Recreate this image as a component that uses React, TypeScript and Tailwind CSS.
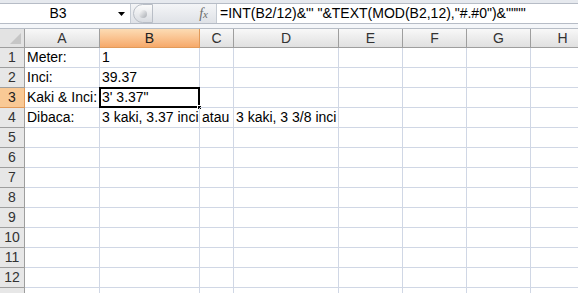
const cols = [
  { key: 'A', w: 'w-[75px]' },
  { key: 'B', w: 'w-[100px]' },
  { key: 'C', w: 'w-[34px]' },
  { key: 'D', w: 'w-[105px]' },
  { key: 'E', w: 'w-[64px]' },
  { key: 'F', w: 'w-[64px]' },
  { key: 'G', w: 'w-[64px]' },
  { key: 'H', w: 'w-[64px]' },
]

const data: Record<string, string> = {
  A1: 'Meter:',
  B1: '1',
  A2: 'Inci:',
  B2: '39.37',
  A3: 'Kaki & Inci:',
  B3: '3\' 3.37"',
  A4: 'Dibaca:',
  B4: '3 kaki, 3.37 inci',
  C4: 'atau',
  D4: '3 kaki, 3 3/8 inci',
}

// row 13 only peeks in at the bottom edge, its label is below the fold
const rows = Array.from({ length: 13 }, (_, i) => i + 1)

function FormulaBar() {
  return (
    <div className="flex h-[29px] flex-col bg-[#dde4ee]">
      <div className="h-[3px] bg-[#e6e9ee]" />
      <div className="flex h-[21px] border-y border-[#b6bcc6] bg-white">
        <div className="relative flex w-[131px] items-center justify-center border-r border-[#c5cbd3] pr-[14px] text-[14px] text-black">
          B3
          <svg className="absolute right-[5px] top-[8px]" width="7" height="4" viewBox="0 0 7 4">
            <path d="M0 0h7L3.5 4z" fill="#000" />
          </svg>
        </div>
        <div className="flex w-[86px] items-center border-r border-[#c5cbd3] bg-gradient-to-b from-[#f4f5f7] to-[#dfe2e7]">
          <div className="ml-[2px] flex h-[19px] w-[20px] items-center justify-center rounded-l-full border border-[#b9bec6] bg-gradient-to-b from-[#fbfbfb] to-[#d9dce1]">
            <div className="h-[8px] w-[8px] rounded-full bg-gradient-to-br from-[#ffffff] to-[#a9adb3]" />
          </div>
          <span className="ml-auto mr-[8px] font-['Liberation_Serif',serif] text-[14px] italic text-[#6b6b6b]">
            f<span className="text-[11px]">x</span>
          </span>
        </div>
        <div className="flex items-center pl-[3px] text-[14px] whitespace-nowrap text-black">
          =INT(B2/12)&amp;"' "&amp;TEXT(MOD(B2,12),"#.#0")&amp;""""
        </div>
      </div>
      <div className="h-[5px] border-b border-[#b7bdc6] bg-[#f4f6f9]" />
    </div>
  )
}

export default function App() {
  return (
    <div className="h-[293px] w-[578px] overflow-hidden bg-white font-['Liberation_Sans',Arial,sans-serif]">
      <FormulaBar />
      <div className="flex h-[19px]">
        <div className="relative w-[25px] shrink-0 border-r border-b border-[#9e9e9e] bg-[#e3e3e3]">
          <svg className="absolute right-[3px] bottom-[3px]" width="11" height="11" viewBox="0 0 11 11">
            <path d="M11 0V11H0z" fill="#c6c6c6" />
          </svg>
        </div>
        {cols.map((c) => (
          <div
            key={c.key}
            className={`${c.w} flex shrink-0 items-center justify-center border-r border-b text-[14px] ${
              c.key === 'B'
                ? 'border-[#e19a5a] bg-gradient-to-b from-[#fcdcb4] to-[#f6a96a] text-[#222]'
                : 'border-[#9e9e9e] bg-gradient-to-b from-[#f8f8f8] to-[#e0e0e0] text-[#333]'
            }`}
          >
            {c.key}
          </div>
        ))}
      </div>
      {rows.map((r) => (
        <div key={r} className="flex h-[20px]">
          <div
            className={`flex w-[25px] shrink-0 items-end justify-center border-r border-b pb-[1px] text-[14px] leading-[17px] ${
              r === 3
                ? 'border-[#e19a5a] bg-[#f9c995] text-[#222]'
                : 'border-[#9e9e9e] bg-[#e7e7e7] text-[#333]'
            }`}
          >
            {r < 13 ? r : ''}
          </div>
          {cols.map((c) => {
            const id = `${c.key}${r}`
            const selected = id === 'B3'
            return (
              <div
                key={c.key}
                className={`${c.w} relative flex shrink-0 items-end overflow-visible border-r border-b border-[#d0d7e5] pb-[1px] pl-[2px] text-[14px] leading-[17px] whitespace-nowrap text-black`}
              >
                {data[id]}
                {selected && (
                  <>
                    <div className="pointer-events-none absolute -top-[1px] -left-[1px] h-[21px] w-[101px] border-2 border-black" />
                    <div className="absolute -right-[3px] -bottom-[3px] h-[5px] w-[5px] border border-white bg-black" />
                  </>
                )}
              </div>
            )
          })}
        </div>
      ))}
    </div>
  )
}
